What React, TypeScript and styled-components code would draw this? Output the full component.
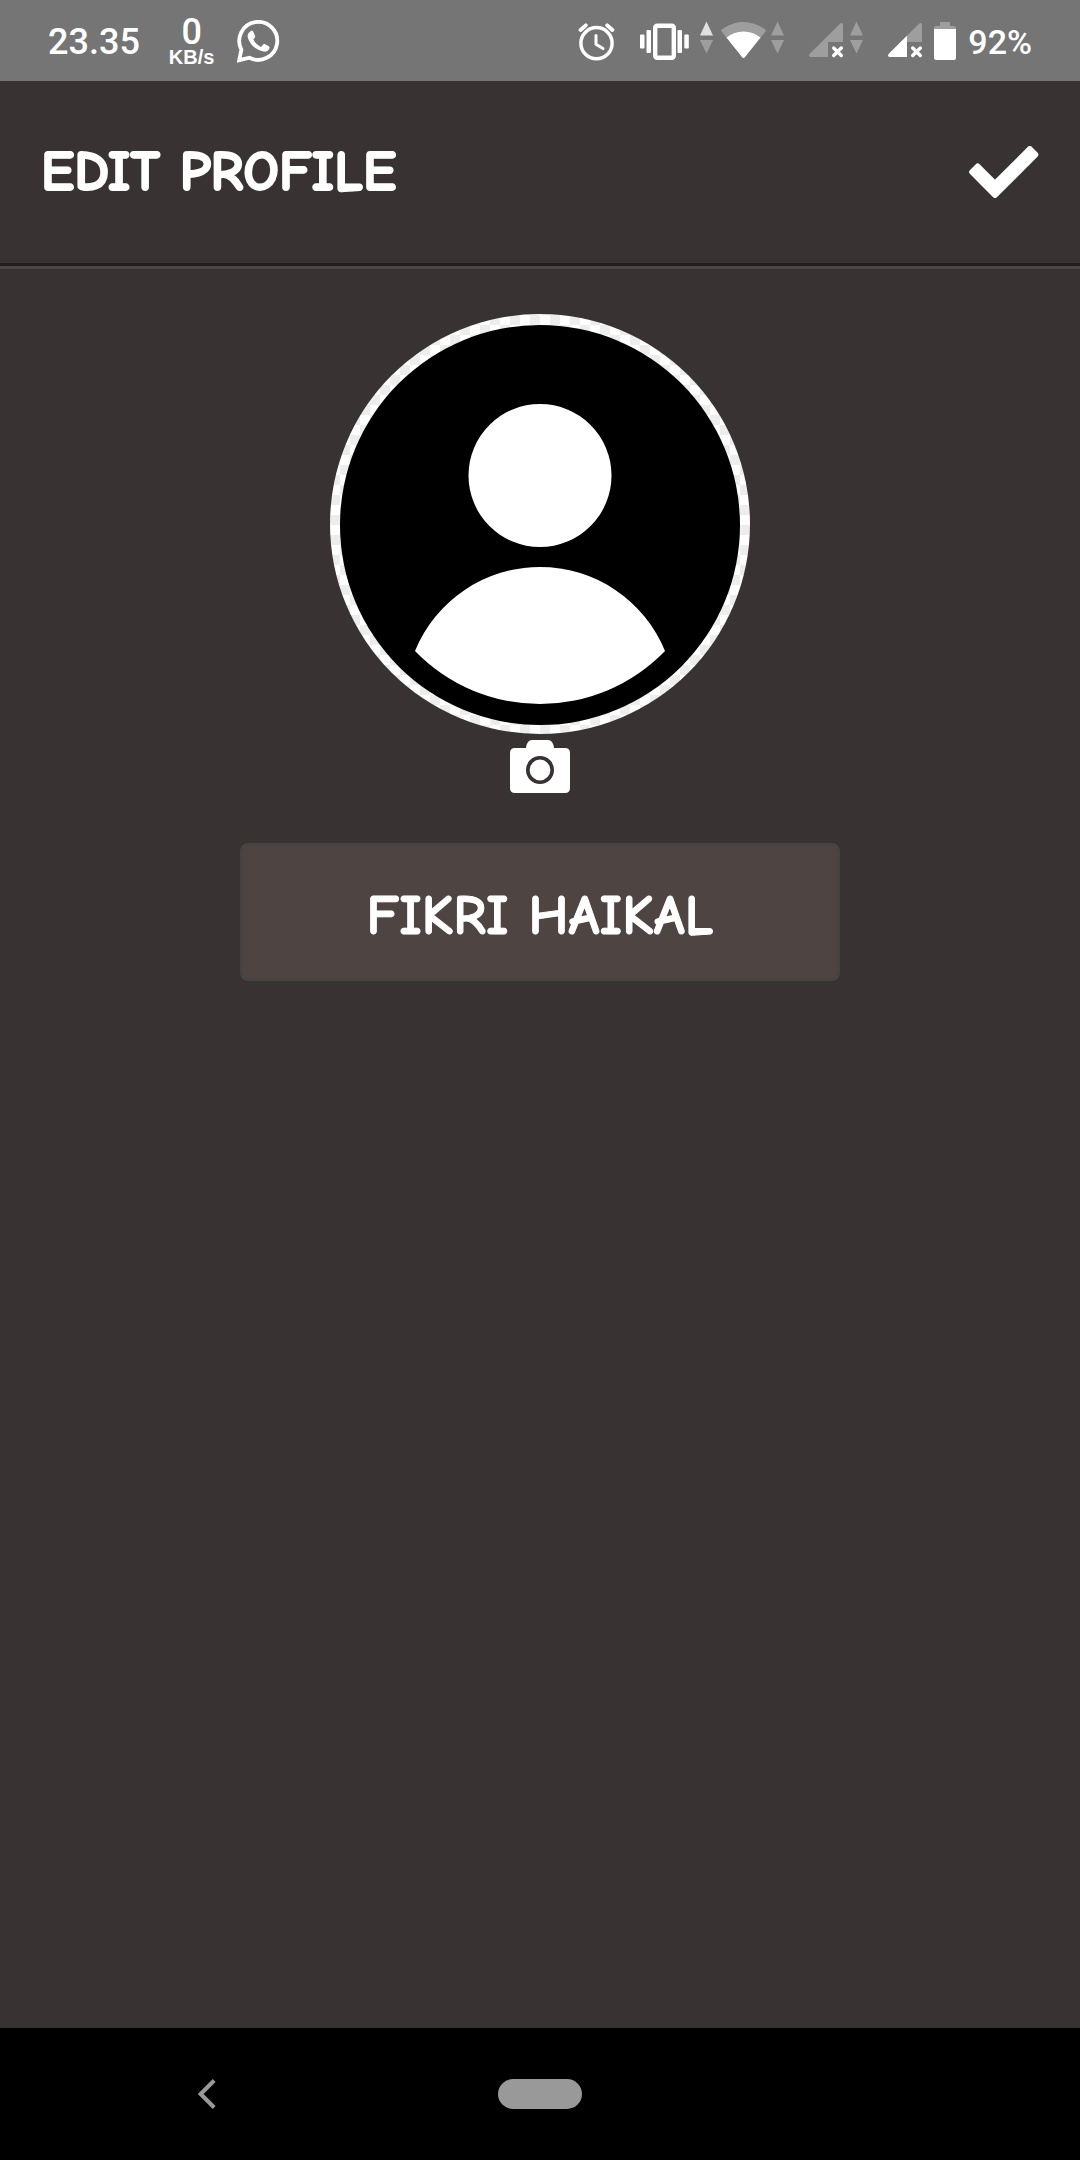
import React from "react";
import styled, { createGlobalStyle } from "styled-components";

const GlobalStyle = createGlobalStyle`
  *, *::before, *::after { box-sizing: border-box; }
  body { margin: 0; background: #393232; }
  button, input { margin: 0; padding: 0; border: 0; background: none; color: inherit; font: inherit; }
  button { cursor: pointer; }
  svg { display: block; flex: none; }
`;

const Page = styled.div`
  display: flex;
  flex-direction: column;
  min-height: 100vh;
  background: #393232;
  color: #fff;
  font-family: Roboto, sans-serif;
`;

const StatusBar = styled.div`
  display: flex;
  align-items: center;
  justify-content: space-between;
  height: 81px;
  padding: 2px 48px 0;
  background: #757575;
`;

const StatusGroup = styled.div<{ $gap: number }>`
  display: flex;
  align-items: center;
  gap: ${(p) => p.$gap}px;
`;

const Clock = styled.time`
  font-size: 36px;
  font-weight: 500;
  line-height: 40px;
`;

const Speed = styled.div`
  display: flex;
  flex-direction: column;
  align-items: center;
`;

const SpeedValue = styled.span`
  font-size: 36px;
  font-weight: 500;
  line-height: 30px;
`;

const SpeedUnit = styled.span`
  font-family: "Liberation Sans", Arial, sans-serif;
  font-size: 20px;
  font-weight: 700;
  line-height: 20px;
`;

const BatteryLevel = styled.span`
  font-size: 34px;
  font-weight: 500;
  line-height: 40px;
`;

const Header = styled.header`
  display: flex;
  align-items: center;
  justify-content: space-between;
  height: 188px;
  padding: 0 41px 3px;
  border-bottom: 3px solid #4e4543;
  box-shadow: inset 0 -3px #231f1f;
`;

const Title = styled.h1`
  margin: 0;
  font-family: "Comic Neue", "Noto Sans", sans-serif;
  font-size: 56px;
  font-weight: 700;
  line-height: 64px;
  -webkit-text-stroke: 2px #fff;
`;

const Form = styled.form`
  display: flex;
  flex: 1;
  flex-direction: column;
  align-items: center;
  padding: 45px 24px;
`;

const Avatar = styled.div`
  width: 420px;
  max-width: 100%;
  overflow: hidden;
  border-radius: 50%;
  background: conic-gradient(#fff 25%, #ededed 0 50%, #fff 0 75%, #ededed 0) 0 1px / 20px 20px;
`;

const PhotoButton = styled.button`
  margin: 6px 0 50px;
`;

const NameInput = styled.input`
  width: 600px;
  max-width: 100%;
  height: 138px;
  padding: 8px 24px 0;
  border: 3px solid #464443;
  border-radius: 8px;
  background: #4e4543;
  text-align: center;
  font-family: "Comic Neue", "Noto Sans", sans-serif;
  font-size: 56px;
  font-weight: 700;
  outline: none;
  -webkit-text-stroke: 1px #fff;
`;

const NavBar = styled.nav`
  display: grid;
  grid-template-columns: 23fr 14fr 23fr;
  align-items: center;
  justify-items: center;
  height: 132px;
  background: #000;
`;

const HomePill = styled.button`
  width: 84px;
  height: 30px;
  border-radius: 15px;
  background: #999;
`;

const DIM = "#9e9e9e";

const WhatsAppIcon = () => (
  <svg width="43" height="43" viewBox="0 0 43 43" aria-hidden="true">
    <path d="M2.2 40.2 4.4 29.6A19 19 0 1 1 12.5 37.7Z" fill="none" stroke="#fff" strokeWidth="3.8" strokeLinejoin="miter" />
    <path d="M13.6 11.2c1-.6 2.3-.4 2.8.7l1.7 4c.3.8.1 1.5-.5 2.2l-1.300 1.500c1.900 3.400 4.300 5.800 7.800 7.300l1.600-2c.6-.8 1.300-1 2.200-.6l3.600 1.800c1 .5 1.200 1.200.9 2.200-.8 2.500-3.300 3.800-5.900 3.300C18.500 30 12 23.700 10.700 17c-.4-2.300.8-4.600 2.900-5.800Z" fill="#fff" />
  </svg>
);

const AlarmIcon = () => (
  <svg width="40" height="41" viewBox="0 0 40 41" fill="none" stroke="#fff" strokeLinecap="round" strokeLinejoin="round" aria-hidden="true">
    <circle cx="18.5" cy="22.2" r="15.6" strokeWidth="3.5" />
    <path d="M18 14.5V23.2L25 27.6" strokeWidth="3" />
    <path d="M2.6 9 7.8 4.300M34.400 9 29.200 4.300" strokeWidth="3.8" />
  </svg>
);

const VibrateIcon = () => (
  <svg width="55" height="41" viewBox="0 0 55 41" fill="#fff" aria-hidden="true">
    <rect x="0" y="13.5" width="4.5" height="14" rx="1" />
    <rect x="6.5" y="9" width="4.5" height="23" rx="1" />
    <rect x="15.2" y="4.7" width="18.6" height="32" rx="2" fill="none" stroke="#fff" strokeWidth="4.4" />
    <rect x="37.5" y="9" width="4.5" height="23" rx="1" />
    <rect x="44.3" y="13.5" width="4.5" height="14" rx="1" />
  </svg>
);

const TrafficIcon = ({ up = DIM }: { up?: string }) => (
  <svg width="16" height="41" viewBox="0 0 16 41" aria-hidden="true">
    <path d="M6.5.5 13 14.5H0Z" fill={up} />
    <path d="M6.5 32.5 13 19H0Z" fill={DIM} />
  </svg>
);

const WifiIcon = () => (
  <svg width="45" height="41" viewBox="0 0 45 41" aria-hidden="true">
    <path d="M.6 10.6Q-.2 9.3 1 8.4C14-1.6 31-1.6 44 8.4Q45.300 9.300 44.500 10.600L24 36Q22.500 38 21 36Z" fill={DIM} />
    <path d="M5.5 16.5C15 8.5 30 8.5 39.5 16.5L24 36Q22.500 38 21 36Z" fill="#fff" />
  </svg>
);

const SignalIcon = ({ half = false }: { half?: boolean }) => (
  <svg width="36" height="41" viewBox="0 0 36 41" aria-hidden="true">
    <path d="M31 2.7Q34 .8 34 4V21H19V36H1.5Q-.7 35 .6 33.100Z" fill={DIM} />
    {half && <path d="M19 14.7V36H1.5Q-.7 35 .6 33.100Z" fill="#fff" />}
    <path d="M24.7 27 32.3 34.5M32.300 27 24.700 34.500" stroke="#fff" strokeWidth="3.4" strokeLinecap="round" />
  </svg>
);

const BatteryIcon = () => (
  <svg width="24" height="41" viewBox="0 0 24 41" aria-hidden="true">
    <path d="M6 1H16V5H20Q22 5 22 7V10H0V7Q0 5 2 5H6Z" fill={DIM} />
    <path d="M0 8H22V37Q22 39 20 39H2Q0 39 0 37Z" fill="#fff" />
  </svg>
);

const CheckIcon = () => (
  <svg width="70" height="52" viewBox="0 0 70 52" aria-hidden="true">
    <path d="M3.2 26 8.700 20.500 26 37.900 60.800 3.100 66.300 8.600 26 49Z" fill="#fff" stroke="#fff" strokeWidth="6" strokeLinejoin="round" />
  </svg>
);

const PersonPicture = () => (
  <svg width="100%" viewBox="0 0 420 420" role="img" aria-label="Profile picture">
    <circle cx="210" cy="211" r="200" />
    <circle cx="210" cy="161.5" r="71.5" fill="#fff" />
    <path d="M85 337A135 135 0 0 1 335 337A174 174 0 0 1 85 337Z" fill="#fff" />
  </svg>
);

const CameraIcon = () => (
  <svg width="60" height="53" viewBox="0 0 60 53" aria-hidden="true">
    <path d="M22 0H38Q43 0 44 8H55Q60 8 60 13V48Q60 53 55 53H5Q0 53 0 48V13Q0 8 5 8H16Q17 0 22 0Z" fill="#fff" />
    <circle cx="30" cy="30" r="12.2" fill="none" stroke="#393232" strokeWidth="3.6" />
  </svg>
);

const BackIcon = () => (
  <svg width="18" height="30" viewBox="0 0 18 30" aria-hidden="true">
    <path d="M16.2 1.5 2.700 15 16.200 28.500" fill="none" stroke="#999" strokeWidth="4" />
  </svg>
);

export default function App() {
  return (
    <Page>
      <GlobalStyle />
      <StatusBar>
        <StatusGroup $gap={29}>
          <Clock>23.35</Clock>
          <StatusGroup $gap={23}>
            <Speed>
              <SpeedValue>0</SpeedValue>
              <SpeedUnit>KB/s</SpeedUnit>
            </Speed>
            <WhatsAppIcon />
          </StatusGroup>
        </StatusGroup>
        <StatusGroup $gap={22}>
          <AlarmIcon />
          <StatusGroup $gap={5}>
            <VibrateIcon />
            <TrafficIcon up="#e0e0e0" />
            <WifiIcon />
            <TrafficIcon />
          </StatusGroup>
          <StatusGroup $gap={5}>
            <SignalIcon />
            <TrafficIcon />
          </StatusGroup>
          <StatusGroup $gap={10}>
            <SignalIcon half />
            <BatteryIcon />
            <BatteryLevel>92%</BatteryLevel>
          </StatusGroup>
        </StatusGroup>
      </StatusBar>
      <Header>
        <Title>EDIT PROFILE</Title>
        <button type="submit" form="profile" aria-label="Save">
          <CheckIcon />
        </button>
      </Header>
      <Form id="profile" onSubmit={(e) => e.preventDefault()}>
        <Avatar>
          <PersonPicture />
        </Avatar>
        <PhotoButton type="button" aria-label="Change photo">
          <CameraIcon />
        </PhotoButton>
        <NameInput type="text" aria-label="Name" defaultValue="FIKRI HAIKAL" />
      </Form>
      <NavBar>
        <button type="button" aria-label="Back">
          <BackIcon />
        </button>
        <HomePill type="button" aria-label="Home" />
      </NavBar>
    </Page>
  );
}
